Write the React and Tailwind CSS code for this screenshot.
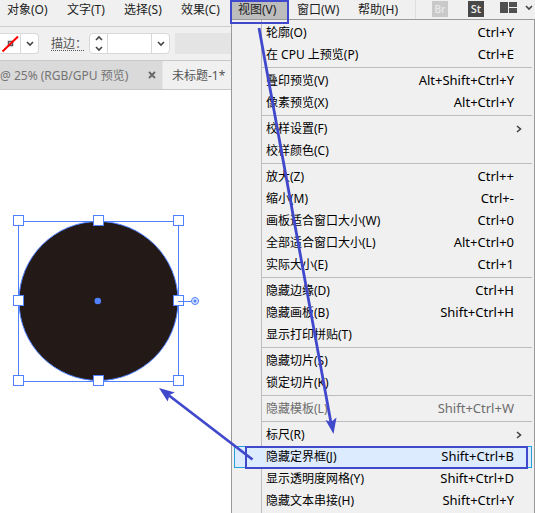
import React from "react";

const MENU = [
  [["轮廓(O)", "Ctrl+Y"], ["在 CPU 上预览(P)", "Ctrl+E"]],
  [["叠印预览(V)", "Alt+Shift+Ctrl+Y"], ["像素预览(X)", "Alt+Ctrl+Y"]],
  [["校样设置(F)", ">"], ["校样颜色(C)", ""]],
  [
    ["放大(Z)", "Ctrl++"],
    ["缩小(M)", "Ctrl+-"],
    ["画板适合窗口大小(W)", "Ctrl+0"],
    ["全部适合窗口大小(L)", "Alt+Ctrl+0"],
    ["实际大小(E)", "Ctrl+1"],
  ],
  [["隐藏边缘(D)", "Ctrl+H"], ["隐藏画板(B)", "Shift+Ctrl+H"], ["显示打印拼贴(T)", ""]],
  [["隐藏切片(S)", ""], ["锁定切片(K)", ""]],
  [["隐藏模板(L)", "Shift+Ctrl+W", "disabled"]],
  [
    ["标尺(R)", ">"],
    ["隐藏定界框(J)", "Shift+Ctrl+B", "active"],
    ["显示透明度网格(Y)", "Shift+Ctrl+D"],
    ["隐藏文本串接(H)", "Shift+Ctrl+Y"],
  ],
];

function Chevron({ d = "M1 2l3 3 3-3", w = 8, h = 7 }) {
  return (
    <svg width={w} height={h} viewBox={`0 0 ${w} ${h}`} fill="none" stroke="#444" strokeWidth="1.6" aria-hidden="true">
      <path d={d} />
    </svg>
  );
}

function MenuItem({ label, keys, state }) {
  const look =
    state === "active"
      ? "border-[#26a0da] bg-[#ddebff]"
      : state === "disabled"
        ? "border-transparent text-[#6d6d6d]"
        : "border-transparent";
  return (
    <button
      type="button"
      role="menuitem"
      disabled={state === "disabled"}
      className={`flex h-[22px] w-full items-center justify-between border pr-[17px] pb-px pl-[31px] text-left whitespace-nowrap ${look}`}
    >
      <span>{label}</span>
      {keys === ">" ? (
        <span className="-mr-2">
          <Chevron d="M1 1l3.500 3-3.500 3" w={6} h={8} />
        </span>
      ) : (
        <span className="text-[13px]">{keys}</span>
      )}
    </button>
  );
}

function ViewMenu() {
  return (
    <div
      role="menu"
      className="absolute top-full left-0 z-10 w-[304px] border border-[#999] bg-[#f0f0f0] px-[2px] py-[2px] text-black"
    >
      <div className="absolute inset-y-0 left-[29px] w-px bg-[#bdbdbd]" />
      <div className="relative">
        {MENU.map((group, i) => (
          <div key={i}>
            {i > 0 && (
              <div className="flex h-1 pt-px pl-7" role="separator">
                <div className="h-px w-full bg-[#bdbdbd]" />
              </div>
            )}
            {group.map(([label, keys, state]) => (
              <MenuItem key={label} label={label} keys={keys} state={state} />
            ))}
          </div>
        ))}
      </div>
    </div>
  );
}

function MenuBar() {
  const item = "block h-[19px] pt-px whitespace-nowrap leading-[18px]";
  return (
    <nav className="flex h-[27px] items-start border-b border-[#cfcfcf] text-[#222]">
      <button type="button" className={`${item} w-[58px] pl-[7px] text-left`}>对象(O)</button>
      <button type="button" className={`${item} w-[57px] pl-[9px] text-left`}>文字(T)</button>
      <button type="button" className={`${item} w-[57px] pl-[9px] text-left`}>选择(S)</button>
      <button type="button" className={`${item} w-[59px] pl-[9px] text-left`}>效果(C)</button>
      <div className="relative">
        <button type="button" aria-expanded="true" className={`${item} w-[57px] bg-[#bdbdbd] pl-[7px] text-left`}>
          视图(V)
        </button>
        <ViewMenu />
      </div>
      <button type="button" className={`${item} w-[61px] pl-[9px] text-left`}>窗口(W)</button>
      <button type="button" className={`${item} w-[66px] pl-[9px] text-left`}>帮助(H)</button>
      <div className="h-[19px] w-px bg-[#dedede]" />
      <div className="ml-auto flex items-start pt-px">
        <button type="button" className="mr-5 h-4 w-4 bg-[#c9c9c9] text-center font-['Open_Sans','Noto_Sans',sans-serif] text-[10px] leading-4 font-semibold text-[#e9e9e9]">Br</button>
        <button type="button" className="mr-4 h-4 w-4 bg-[#484848] text-center font-['Open_Sans','Noto_Sans',sans-serif] text-[11px] leading-4 font-semibold text-[#eee]">St</button>
        <button type="button" aria-label="排列文档" className="flex items-center gap-2 pt-px pr-[2px]">
          <svg width="17" height="11" viewBox="0 0 17 11" fill="#505050">
            <path d="M0 0h8v11H0zM9 0h8v5H9zM9 6h8v5H9z" />
          </svg>
          <Chevron />
        </button>
      </div>
    </nav>
  );
}

function ControlBar() {
  return (
    <div className="flex h-[34px] items-center border-b border-[#c8c8c8] text-[#555]">
      <button
        type="button"
        aria-label="描边颜色"
        className="flex h-[21px] w-[39px] items-center rounded-r-sm border border-l-0 border-[#d8d8d8] bg-white"
      >
        <svg width="20" height="19" viewBox="0 0 20 19" fill="none">
          <path d="M8.500 7.500h4v4h-4z" stroke="#555" strokeWidth="1.5" />
          <path d="M2.500 17.500L18 2.500" stroke="#f00" strokeWidth="2" />
        </svg>
        <span className="flex h-full flex-1 items-center justify-center border-l border-[#d8d8d8]">
          <Chevron />
        </span>
      </button>
      <label
        htmlFor="weight"
        className="ml-3 h-[15px] w-[33px] border-b border-dotted border-[#555] leading-[15px] whitespace-nowrap"
      >
        描边：
      </label>
      <div className="ml-[5px] flex h-[21px] w-[81px] items-stretch rounded-sm border border-[#d8d8d8] bg-white">
        <button type="button" aria-label="步进" className="flex w-[18px] flex-col items-center justify-between border-r border-[#d8d8d8] py-px">
          <Chevron d="M1 5l3-3 3 3" />
          <Chevron />
        </button>
        <input id="weight" className="min-w-0 flex-1 bg-transparent outline-none" />
        <button type="button" aria-label="展开" className="flex w-[18px] items-center justify-center border-l border-[#d8d8d8]">
          <Chevron />
        </button>
      </div>
      <div className="ml-[5px] h-[21px] flex-1 bg-[#e4e4e4]" />
    </div>
  );
}

function Tabs() {
  return (
    <div className="flex h-[29px] items-stretch border-b border-[#c8c8c8]">
      <div className="flex w-[163px] items-center justify-between border-r border-[#e8e8e8] bg-[#dadada] pr-[6px] text-[#747474]">
        <span className="whitespace-nowrap">@ 25% (RGB/GPU 预览)</span>
        <button type="button" aria-label="关闭" className="flex">
          <svg width="8" height="8" viewBox="0 0 8 8" stroke="#666" strokeWidth="1.8">
            <path d="M1 1l6 6M7 1l-6 6" />
          </svg>
        </button>
      </div>
      <div className="flex items-center pl-[9px] whitespace-nowrap text-[#555]">未标题-1*</div>
    </div>
  );
}

function Artwork() {
  const handles = [
    [18, 130], [98, 130], [178, 130],
    [18, 210], [178, 210],
    [18, 290], [98, 290], [178, 290],
  ];
  return (
    <svg width="230" height="320" viewBox="0 0 230 320" fill="none" stroke="#4f80ff" aria-label="圆形">
      <circle cx="98.500" cy="211" r="79.500" fill="#231916" />
      <path d="M18.500 131.500h160v160h-160z" />
      {handles.map(([x, y]) => (
        <rect key={`${x}-${y}`} x={x - 4.5} y={y - 4.5} width="10" height="10" fill="#fff" />
      ))}
      <path d="M178 211.500h13" />
      <circle cx="195" cy="211" r="3.500" fill="#dbe5ff" />
      <circle cx="195" cy="211" r="1.500" fill="#4f80ff" stroke="none" />
      <circle cx="97.800" cy="211" r="3.300" fill="#4f80ff" stroke="none" />
    </svg>
  );
}

function Annotations() {
  return (
    <svg
      className="pointer-events-none absolute top-0 left-0 z-20"
      width="535"
      height="513"
      viewBox="0 0 535 513"
      fill="none"
      stroke="#4048cc"
      strokeWidth="2"
      aria-hidden="true"
    >
      <path d="M231 1h57v22h-57zM246 447h281v21H246z" />
      <path d="M259 28L331 423M252.500 459.500L169 395.500" strokeWidth="2.800" />
      <path d="M333.500 434L325.500 420l5.500 2 5.500-4.500zM159 388l15.800 4.500-5.300 2.500-1.800 6.500z" fill="#4048cc" stroke="none" />
    </svg>
  );
}

export default function App() {
  return (
    <div className="relative h-screen overflow-hidden bg-[#f0f0f0] font-['Noto_Sans','Noto_Sans_CJK_SC',sans-serif] text-[12px] leading-[19px]">
      <MenuBar />
      <ControlBar />
      <Tabs />
      <main className="h-full bg-white">
        <Artwork />
      </main>
      <Annotations />
    </div>
  );
}
